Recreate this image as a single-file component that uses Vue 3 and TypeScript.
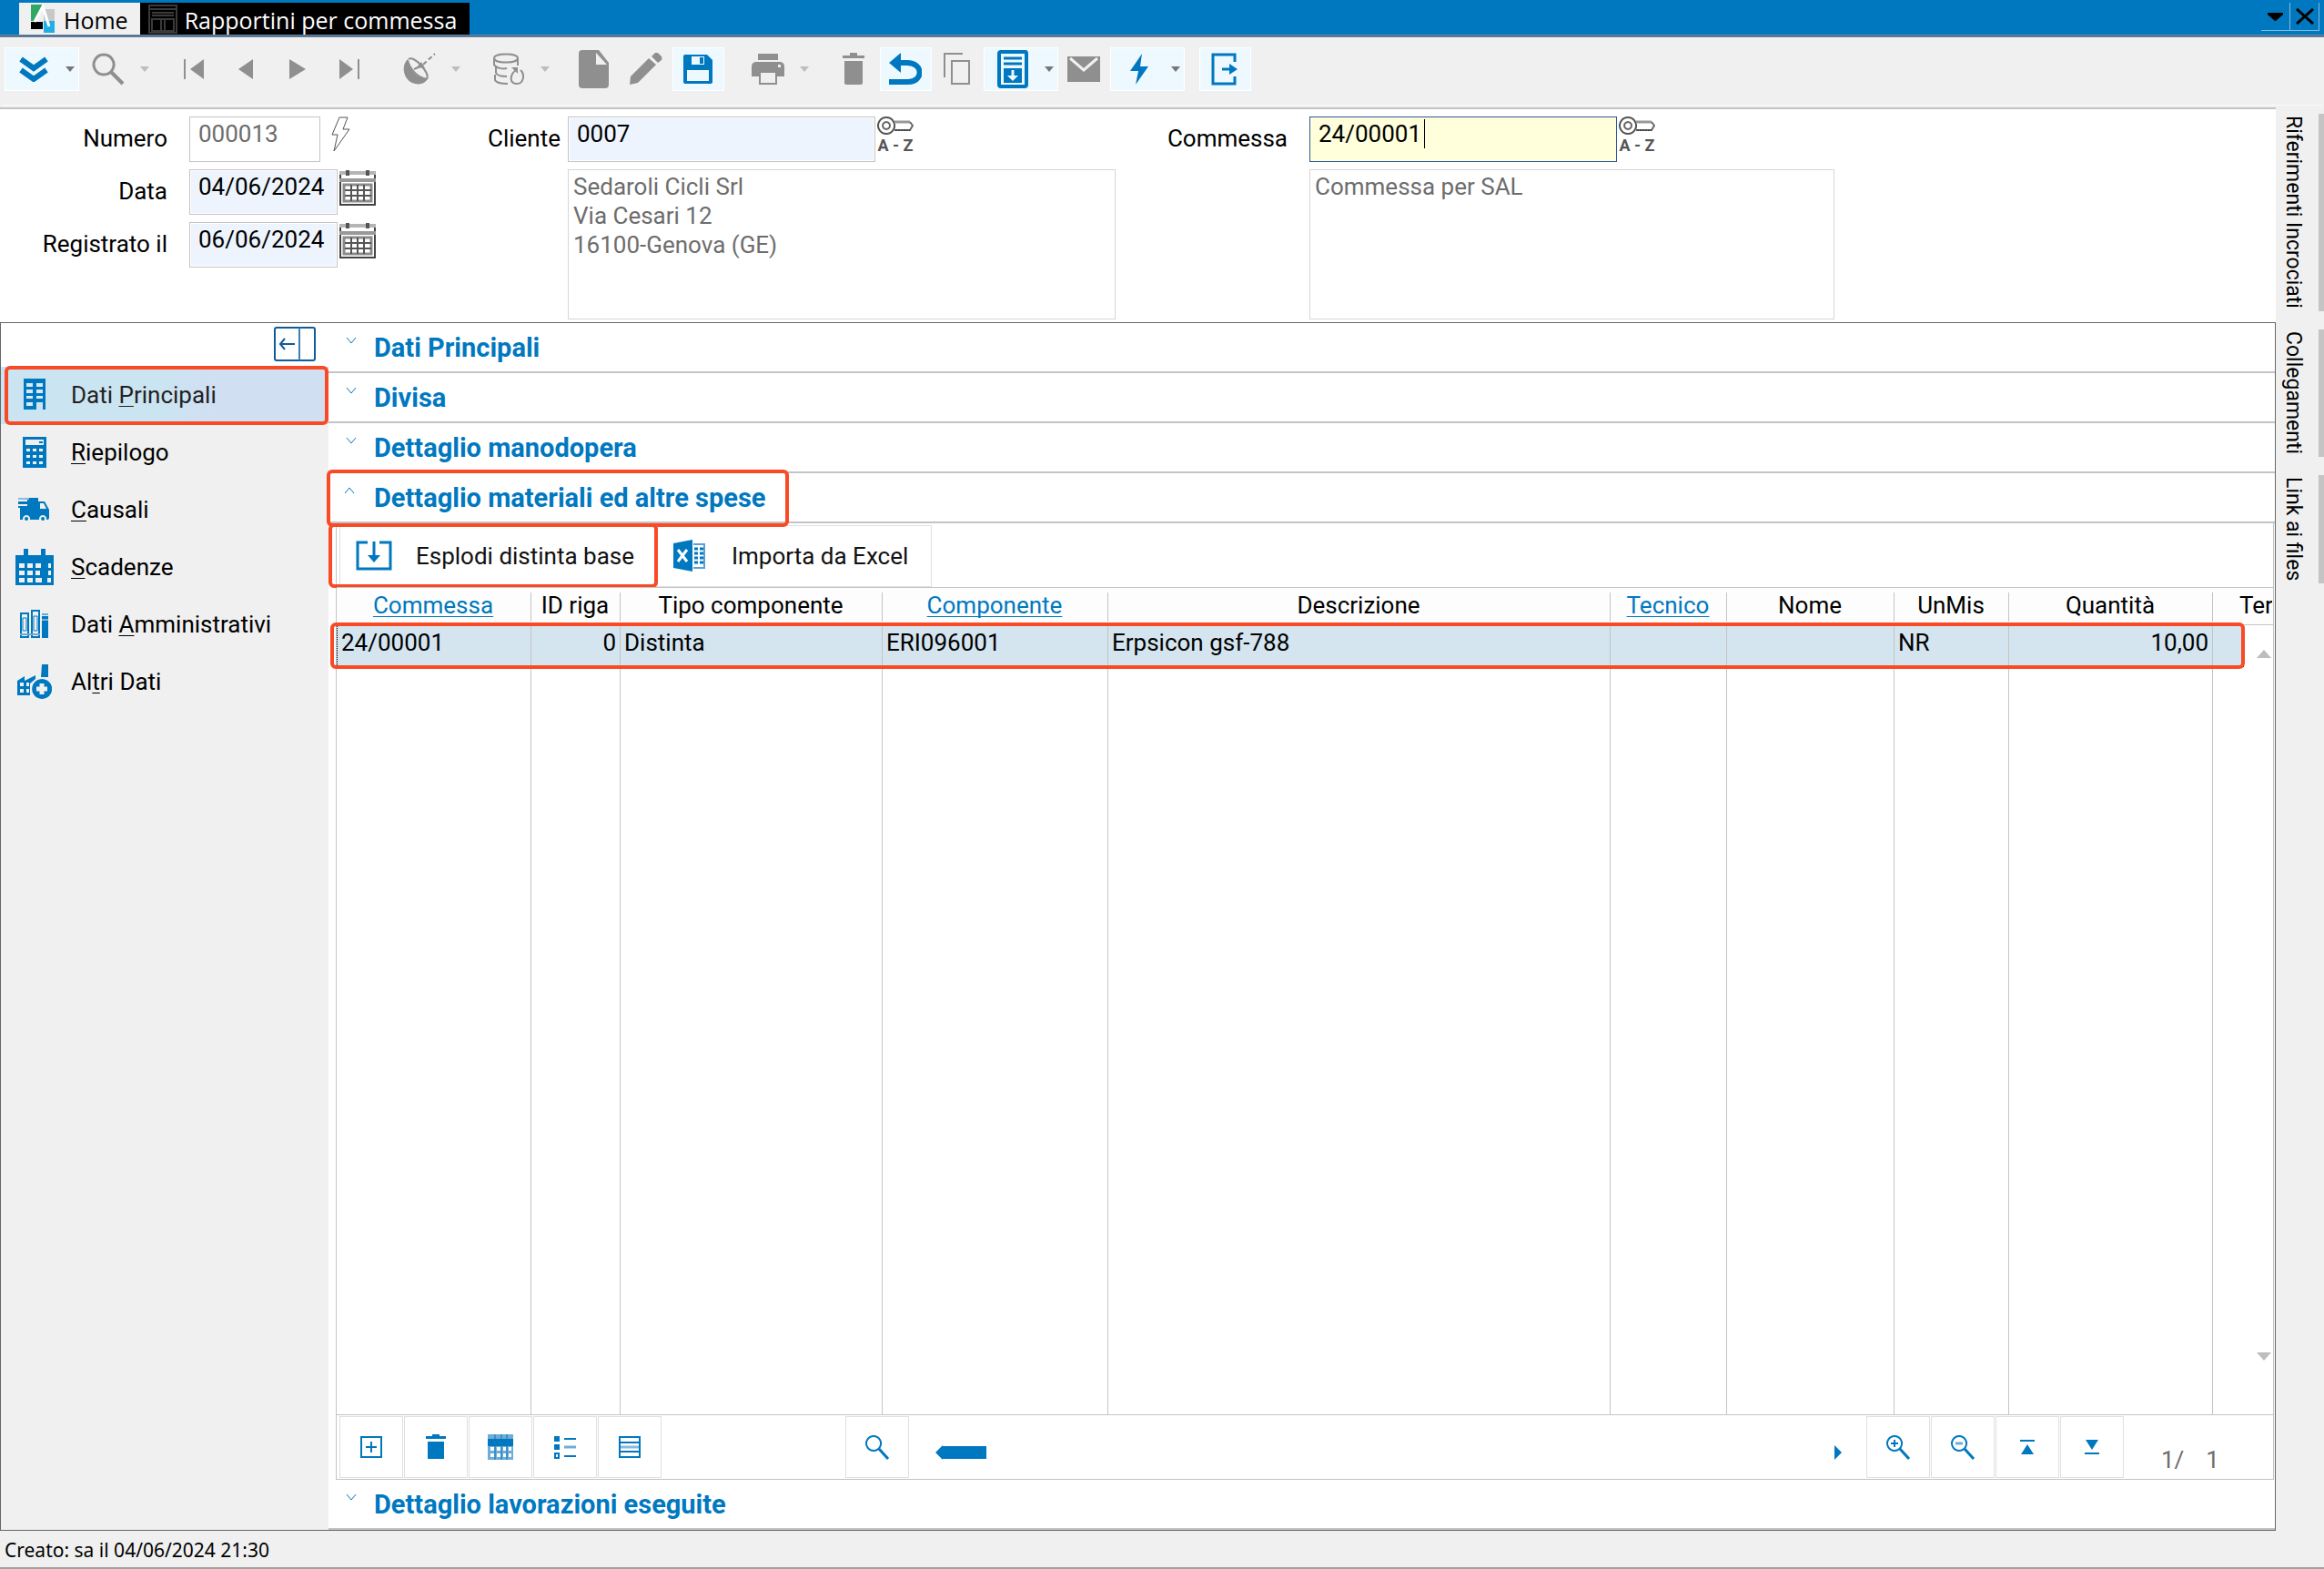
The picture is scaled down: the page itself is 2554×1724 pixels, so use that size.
<script setup lang="ts">
import { h, ref } from 'vue'

interface Shape {
  d: string
  fill?: string
  stroke?: string
  w?: number
  dash?: string
}
interface Glyph {
  w: number
  h: number
  shapes: Shape[]
}

const C = 'currentColor'
const line = (d: string, w = 2, stroke = C, dash?: string): Shape => ({ d, stroke, w, dash })
const solid = (d: string, fill = C): Shape => ({ d, fill })

const glyphs: Record<string, Glyph> = {
  down2: { w: 32, h: 28, shapes: [line('M2 3L16 13L30 3', 6), line('M2 15L16 25L30 15', 6)] },
  search: { w: 36, h: 36, shapes: [line('M13 2a11 11 0 1 0 .1 0z', 3), line('M21 21L34 34', 4)] },
  first: { w: 24, h: 24, shapes: [line('M2 1V23', 2), solid('M23 1V23L8 12z')] },
  prev: { w: 18, h: 24, shapes: [solid('M17 1V23L1 12z')] },
  next: { w: 20, h: 24, shapes: [solid('M1 1V23L19 12z')] },
  last: { w: 24, h: 24, shapes: [line('M22 1V23', 2), solid('M1 1V23L16 12z')] },
  dish: {
    w: 36, h: 36,
    shapes: [
      solid('M5 7C-3 15 1 29 10 33C17 36 25 34 27 28C17 29 7 21 5 7z'),
      line('M6 7C9 5 15 8 20 14C26 21 28 26 26 29', 2),
      line('M5 8C7 17 15 27 26 29', 2),
      line('M12 18L19 15', 2),
      line('M22 13L35 1', 2, C, '5 3'),
      solid('M15 16L20 10L24 17z'),
    ],
  },
  database: {
    w: 36, h: 36,
    shapes: [
      line('M2 6C2 0 28 0 28 6C28 12 2 12 2 6z', 2),
      line('M2 6V13C4 17 12 18 16 17M28 6V14', 2),
      line('M4 15V22C5 25 10 26 16 26M3 24V30C5 34 12 34 17 34', 2),
      line('M26 19C20 23 18 33 26 34C35 35 36 23 31 19', 2),
      solid('M21 16H28V23z'),
    ],
  },
  file: { w: 34, h: 42, shapes: [solid('M4 0H22L33 14V38Q33 42 29 42H4Q0 42 0 38V4Q0 0 4 0z'), solid('M19 3V16H31z', '#f0f0f0')] },
  pencil: { w: 36, h: 36, shapes: [solid('M0 35L1 26L21 6L29 13L9 33z'), solid('M24 4L28 0Q30 -1 32 1L35 4Q36 6 35 8L31 11z')] },
  save: {
    w: 32, h: 32,
    shapes: [
      solid('M2 0H26L32 6V30Q32 32 30 32H2Q0 32 0 30V2Q0 0 2 0z'),
      solid('M9 2H23V11H9z', '#eef9ff'), solid('M18 3H22V10H18z'),
      solid('M4 17H28V29H4z', '#eef9ff'),
    ],
  },
  print: {
    w: 36, h: 36,
    shapes: [
      solid('M7 1H29V8H7z'), solid('M4 10H32Q36 11 36 15V26H28V20H8V26H0V15Q0 11 4 10z'),
      line('M9 21H27V34H9z', 2), solid('M29 13H32V16H29z', '#f0f0f0'),
    ],
  },
  trash: { w: 24, h: 36, shapes: [solid('M0 3H8V0H16V3H24V6H0z'), solid('M2 9H22V33Q22 35 20 35H4Q2 35 2 33z')] },
  undo: { w: 36, h: 36, shapes: [line('M8 11H20C38 11 38 32 21 32H0', 6), solid('M0 11L13 0V22z')] },
  copy: { w: 30, h: 36, shapes: [line('M1 27V1H21', 2), line('M9 9H28V34H9z', 2)] },
  archive: {
    w: 34, h: 42,
    shapes: [
      line('M3 2H31Q32 2 32 4V38Q32 40 30 40H4Q2 40 2 38V4Q2 2 4 2z', 4),
      line('M7 9H27M7 15H27', 3), solid('M7 20H27V36H7z'),
      line('M17 22V30', 3, '#eef9ff'), solid('M11 28H23L17 34z', '#eef9ff'),
    ],
  },
  mail: { w: 36, h: 30, shapes: [solid('M0 1H36V29H0z'), line('M3 3L18 16L33 3', 3, '#f0f0f0')] },
  bolt: { w: 20, h: 34, shapes: [solid('M13 0L0 19H9L6 34L20 14H11z')] },
  exit: { w: 30, h: 36, shapes: [line('M26 10V2H2V34H26V26', 3), line('M12 18H24', 3), solid('M20 12L29 18L20 24z')] },
  calendar: {
    w: 40, h: 40,
    shapes: [
      line('M1 4V39H39V4', 2, '#444'), line('M0 4H40', 4, '#b5b5b5'), line('M0 12H40', 4, '#999'),
      line('M9 1V7M31 1V7', 4, '#555'), line('M5 17H35V35H5z', 3, '#8b8b8b'),
      line('M6 23H35M6 29H35M13 17V35M20 17V35M27 17V35', 2, '#555'),
    ],
  },
  boltOutline: { w: 22, h: 40, shapes: [line('M9 1H18L13 14H20L3 38L7 20H1z', 1, '#555')] },
  key: {
    w: 40, h: 22,
    shapes: [line('M10 1a9 9 0 1 0 .1 0z', 2, '#555'), line('M10 6a4 4 0 1 0 .1 0z', 2, '#666'), line('M19 6H36', 3, '#999'), line('M36 6L39 10L36 15H19', 2, '#666'), line('M20 15H36', 2, '#444', '2 1')],
  },
  collapse: {
    w: 46, h: 38,
    shapes: [line('M3 1H43Q45 1 45 3V35Q45 37 43 37H3Q1 37 1 35V3Q1 1 3 1z', 2, '#0f5c99'), line('M28 1V37', 2, '#3f80b4'), line('M7 19H23M12 13L7 19L12 25', 2, '#0f5c99')],
  },
  building: {
    w: 24, h: 36,
    shapes: [solid('M0 0H24V34H21V26H14V34H0z'), solid('M3 5H10V9H3zM14 5H21V9H14zM3 12H10V16H3zM14 12H21V16H14zM3 19H10V22H3zM14 19H21V22H14zM3 26H10V30H3z', '#d8e8f4')],
  },
  calculator: {
    w: 26, h: 34,
    shapes: [solid('M0 0H26V34H0z'), solid('M3 3H23V9H3z', '#f0f0f0'), solid('M18 5H22V7H18z'), solid('M4 13H8V16H4zM11 13H15V16H11zM18 13H22V16H18zM4 20H8V23H4zM11 20H15V23H11zM18 20H22V23H18zM4 27H8V30H4zM11 27H15V30H11zM18 27H22V30H18z', '#f0f0f0')],
  },
  truck: {
    w: 36, h: 30,
    shapes: [
      solid('M10 2H22V26H2V13H0V11H10V9H0V6H10z'), solid('M22 6H29L34 15V24Q34 26 32 26H22z'),
      solid('M24 8H28L31 14H24z', '#f0f0f0'), line('M0 3H12', 2, '#8bbbdc'),
      solid('M9 21a4 4 0 1 0 .1 0zM27 21a4 4 0 1 0 .1 0z', '#f0f0f0'), solid('M9 23a2 2 0 1 0 .1 0zM27 23a2 2 0 1 0 .1 0z'),
    ],
  },
  schedule: {
    w: 42, h: 42,
    shapes: [
      solid('M0 8H9V1H14V8H28V1H33V8H42V41H0z'),
      solid('M4 17H10V22H4zM13 17H19V22H13zM22 17H28V22H22zM36 17H39V22H36zM4 25H10V30H4zM13 25H19V30H13zM22 25H27V30H22zM36 25H39V30H36zM4 33H10V38H4zM13 33H19V38H13zM22 33H29V38H22zM35 33H39V38H35z', '#f0f0f0'),
    ],
  },
  books: {
    w: 34, h: 34,
    shapes: [line('M2 5H10V31H2z', 2), line('M14 2H22V31H14z', 2), line('M4 10H8V24H4zM16 8H20V24H16z', 1), solid('M25 8H32V32H25z'), line('M25 6H32M1 28H23', 2, '#6baad6'), line('M25 12H32', 1, '#f0f0f0')],
  },
  factory: {
    w: 38, h: 38,
    shapes: [
      solid('M0 18L8 13V18L20 12V16L14 21V34H0z'), solid('M3 20H7V24H3zM10 20H13V24H10zM3 27H7V31H3zM10 27H13V31H10z', '#f0f0f0'),
      solid('M27 0H34V14H26z'), solid('M27.1 16a11 11 0 1 0 .1 0z'), line('M27 21V33M21 27H33', 5, '#f0f0f0'),
    ],
  },
  explode: { w: 40, h: 34, shapes: [line('M13 2H2V31H38V2H26', 3), line('M20 1V20', 3), solid('M13 16H27L20 24z')] },
  excel: {
    w: 36, h: 36,
    shapes: [
      solid('M0 4L21 0V35L0 31z'), line('M5 11L15 24M15 11L5 24', 3, '#fff'),
      line('M22 5H34V31H22', 2, '#5aa2d3'), line('M23 10H27M29 10H33M23 15H27M29 15H33M23 20H27M29 20H33M23 25H27M29 25H33', 3),
    ],
  },
  add: { w: 24, h: 24, shapes: [line('M1 1H23V23H1z', 2), line('M12 6V18M6 12H18', 2)] },
  remove: { w: 22, h: 28, shapes: [solid('M0 2H7V0H15V2H22V5H0zM2 8H20V27H2z')] },
  gridView: { w: 28, h: 28, shapes: [solid('M0 0H28V28H0z', '#6fadd8'), solid('M0 5H28V13H0z'), solid('M3 14H7V18H3zM10 14H14V18H10zM17 14H20V18H17zM23 14H26V18H23zM3 21H7V25H3zM10 21H14V25H10zM17 21H20V25H17zM23 21H26V25H23z', '#fff'), line('M8 0V28M15 0V28M21 0V28', 1)] },
  listView: { w: 26, h: 28, shapes: [solid('M1 2H7V8H1zM1 11H7V17H1z'), line('M2 21H6V26H2z', 2), line('M12 5H25M12 24H25', 2), line('M12 14H25', 3, '#6fadd8')] },
  tableView: { w: 26, h: 26, shapes: [line('M2 2H24V24H2zM2 8H24M2 18H24', 2), line('M3 13H23', 3, '#8bbbdc')] },
  find: { w: 28, h: 28, shapes: [line('M10 2a8 8 0 1 0 .1 0z', 2), line('M16 16L26 27', 3)] },
  zoomIn: { w: 28, h: 28, shapes: [line('M10 2a8 8 0 1 0 .1 0z', 2), line('M16 16L26 27', 3), line('M10 6V14M6 10H14', 2)] },
  zoomOut: { w: 28, h: 28, shapes: [line('M10 2a8 8 0 1 0 .1 0z', 2), line('M16 16L26 27', 3), line('M6 10H14', 3, '#6fadd8')] },
  top: { w: 16, h: 16, shapes: [line('M0 1H16', 2), solid('M8 5L15 16H1z')] },
  bottom: { w: 16, h: 16, shapes: [line('M0 15H16', 2), solid('M8 11L15 0H1z')] },
  thumb: { w: 56, h: 16, shapes: [solid('M0 8L8 0V16zM8 1H56V15H8z')] },
  scrollRight: { w: 8, h: 16, shapes: [solid('M0 0L8 8L0 16z')] },
  scrollUp: { w: 16, h: 9, shapes: [solid('M0 9L8 0L16 9z')] },
  scrollDown: { w: 16, h: 9, shapes: [solid('M0 0L8 9L16 0z')] },
  caretDown: { w: 10, h: 6, shapes: [solid('M0 0H10L5 6z')] },
  menuDown: { w: 17, h: 9, shapes: [solid('M0 0H17V2L9 9H8L0 2z', '#000')] },
  close: { w: 20, h: 18, shapes: [line('M1 1L19 17M19 1L1 17', 3, '#000')] },
  chevDown: { w: 12, h: 8, shapes: [line('M1 1L6 7L11 1', 1)] },
  chevUp: { w: 12, h: 8, shapes: [line('M1 7L6 1L11 7', 1)] },
  logo: {
    w: 26, h: 32,
    shapes: [solid('M0 0H13L4 18H0z', '#2fa866'), solid('M14 5H26V18H14z', '#c8c8c8'), solid('M0 19H13V27H0z', '#000'), solid('M14 18H26V31H14z', '#21aee6'), line('M4 19L13 2L20 24', 3, '#fff')],
  },
  windowIcon: {
    w: 32, h: 32,
    shapes: [line('M1 1H31V31H1zM1 5H31M4 9H28M4 12H28M4 16H28V29H4zM14 16V29M18 16V29', 2, '#3a3a3a')],
  },
}

function Icon(props: { name: string }) {
  const g = glyphs[props.name]
  return h(
    'svg',
    { class: 'icon', width: g.w, height: g.h, viewBox: `0 0 ${g.w} ${g.h}`, 'aria-hidden': 'true' },
    g.shapes.map((s) =>
      h('path', { d: s.d, fill: s.fill ?? 'none', stroke: s.stroke, 'stroke-width': s.w, 'stroke-dasharray': s.dash }),
    ),
  )
}
Icon.props = ['name']

interface Tool {
  icon: string
  label: string
  drop?: boolean
  on?: boolean
}
const toolGroups: Tool[][] = [
  [{ icon: 'down2', label: 'Espandi', drop: true, on: true }, { icon: 'search', label: 'Cerca', drop: true }],
  [
    { icon: 'first', label: 'Primo' }, { icon: 'prev', label: 'Precedente' },
    { icon: 'next', label: 'Successivo' }, { icon: 'last', label: 'Ultimo' },
  ],
  [{ icon: 'dish', label: 'Radar', drop: true }],
  [{ icon: 'database', label: 'Archivi', drop: true }],
  [{ icon: 'file', label: 'Nuovo' }, { icon: 'pencil', label: 'Modifica' }, { icon: 'save', label: 'Salva', on: true }],
  [{ icon: 'print', label: 'Stampa', drop: true }],
  [
    { icon: 'trash', label: 'Elimina' }, { icon: 'undo', label: 'Annulla', on: true }, { icon: 'copy', label: 'Copia' },
    { icon: 'archive', label: 'Archivia', drop: true, on: true }, { icon: 'mail', label: 'Posta' },
    { icon: 'bolt', label: 'Azioni', drop: true, on: true },
  ],
  [{ icon: 'exit', label: 'Esci', on: true }],
]

const menu = [
  { icon: 'building', pre: 'Dati ', key: 'P', post: 'rincipali', active: true },
  { icon: 'calculator', pre: '', key: 'R', post: 'iepilogo' },
  { icon: 'truck', pre: '', key: 'C', post: 'ausali' },
  { icon: 'schedule', pre: '', key: 'S', post: 'cadenze' },
  { icon: 'books', pre: 'Dati ', key: 'A', post: 'mministrativi' },
  { icon: 'factory', pre: 'Al', key: 't', post: 'ri Dati' },
]

const sections = ['Dati Principali', 'Divisa', 'Dettaglio manodopera']

const columns = [
  { title: 'Commessa', cls: 'c-com', link: true },
  { title: 'ID riga', cls: 'c-id' },
  { title: 'Tipo componente', cls: 'c-tipo' },
  { title: 'Componente', cls: 'c-comp', link: true },
  { title: 'Descrizione', cls: 'c-desc' },
  { title: 'Tecnico', cls: 'c-tec', link: true },
  { title: 'Nome', cls: 'c-nome' },
  { title: 'UnMis', cls: 'c-um' },
  { title: 'Quantità', cls: 'c-qta' },
]
const row = [
  { v: '24/00001' }, { v: '0', num: true }, { v: 'Distinta' }, { v: 'ERI096001' }, { v: 'Erpsicon gsf-788' },
  { v: '' }, { v: '' }, { v: 'NR' }, { v: '10,00', num: true }, { v: '' },
]

const gridTools = [
  { icon: 'add', label: 'Aggiungi riga' }, { icon: 'remove', label: 'Elimina riga' }, { icon: 'gridView', label: 'Griglia' },
  { icon: 'listView', label: 'Elenco' }, { icon: 'tableView', label: 'Tabella' },
]
const pageTools = [
  { icon: 'zoomIn', label: 'Ingrandisci' }, { icon: 'zoomOut', label: 'Riduci' },
  { icon: 'top', label: 'Inizio' }, { icon: 'bottom', label: 'Fine' },
]
const sideTabs = ['Riferimenti Incrociati', 'Collegamenti', 'Link ai files']

const numero = ref('000013')
const data = ref('04/06/2024')
const registrato = ref('06/06/2024')
const cliente = ref('0007')
const commessa = ref('24/00001')
const clienteInfo = ref('Sedaroli Cicli Srl\nVia Cesari 12\n16100-Genova (GE)')
const commessaInfo = ref('Commessa per SAL')
</script>

<template>
  <div class="app">
    <header class="titlebar">
      <nav class="tabs">
        <a href="#home" class="tab home"><Icon name="logo" />Home</a>
        <a href="#rapportini" class="tab current"><Icon name="windowIcon" />Rapportini per commessa</a>
      </nav>
      <div class="window-tools">
        <button type="button" aria-label="Elenco finestre"><Icon name="menuDown" /></button>
        <button type="button" aria-label="Chiudi"><Icon name="close" /></button>
      </div>
    </header>

    <div class="toolbar">
      <div v-for="(group, i) in toolGroups" :key="i" class="tool-group">
        <button
          v-for="t in group" :key="t.icon" type="button" class="tool"
          :class="{ on: t.on, drop: t.drop }" :aria-label="t.label"
        >
          <span class="tool-icon"><Icon :name="t.icon" /></span>
          <span v-if="t.drop" class="tool-caret"><Icon name="caretDown" /></span>
        </button>
      </div>
    </div>

    <div class="body">
      <main class="content">
        <form class="form" @submit.prevent>
          <div class="group g1">
            <label for="numero">Numero</label>
            <div class="field">
              <input id="numero" v-model="numero" class="w-num dim" />
              <button type="button" class="aux bolt" aria-label="Numerazione"><Icon name="boltOutline" /></button>
            </div>
            <label for="data">Data</label>
            <div class="field">
              <input id="data" v-model="data" class="w-date" />
              <button type="button" class="aux" aria-label="Calendario data"><Icon name="calendar" /></button>
            </div>
            <label for="registrato">Registrato il</label>
            <div class="field">
              <input id="registrato" v-model="registrato" class="w-date" />
              <button type="button" class="aux" aria-label="Calendario registrazione"><Icon name="calendar" /></button>
            </div>
          </div>
          <div class="group g2">
            <label for="cliente">Cliente</label>
            <div class="field">
              <input id="cliente" v-model="cliente" class="w-code" />
              <button type="button" class="aux" aria-label="Cerca cliente"><Icon name="key" /><b>A - Z</b></button>
            </div>
            <textarea v-model="clienteInfo" class="info" aria-label="Dati cliente" readonly></textarea>
          </div>
          <div class="group g3">
            <label for="commessa">Commessa</label>
            <div class="field">
              <input id="commessa" v-model="commessa" class="w-code active" />
              <i class="text-caret"></i>
              <button type="button" class="aux" aria-label="Cerca commessa"><Icon name="key" /><b>A - Z</b></button>
            </div>
            <textarea v-model="commessaInfo" class="info" aria-label="Dati commessa" readonly></textarea>
          </div>
        </form>

        <div class="panel">
          <aside class="sidebar">
            <div class="side-head">
              <button type="button" class="plain" aria-label="Riduci menu"><Icon name="collapse" /></button>
            </div>
            <a v-for="m in menu" :key="m.icon" href="#" class="side-item" :class="{ active: m.active, marked: m.active }">
              <span class="side-icon"><Icon :name="m.icon" /></span>
              <span>{{ m.pre }}<u>{{ m.key }}</u>{{ m.post }}</span>
            </a>
          </aside>

          <section class="detail">
            <button v-for="s in sections" :key="s" type="button" class="section">
              <Icon name="chevDown" /><span>{{ s }}</span>
            </button>
            <button type="button" class="section open">
              <Icon name="chevUp" /><span class="marked">Dettaglio materiali ed altre spese</span>
            </button>

            <div class="grid-box">
              <div class="actions">
                <button type="button" class="action marked"><Icon name="explode" />Esplodi distinta base</button>
                <button type="button" class="action excel"><Icon name="excel" />Importa da Excel</button>
              </div>
              <div class="table-wrap marked">
                <table>
                  <colgroup>
                    <col v-for="c in columns" :key="c.cls" :class="c.cls" />
                    <col class="c-ter" />
                    <col class="c-scroll" />
                  </colgroup>
                  <thead>
                    <tr>
                      <th v-for="c in columns" :key="c.title">
                        <a v-if="c.link" href="#">{{ c.title }}</a>
                        <template v-else>{{ c.title }}</template>
                      </th>
                      <th class="cut"><span>Ter</span></th>
                      <th class="cut"></th>
                    </tr>
                  </thead>
                  <tbody>
                    <tr class="selected">
                      <td v-for="(c, i) in row" :key="i" :class="{ num: c.num }">{{ c.v }}</td>
                      <td class="scroll up"><button type="button" class="plain" aria-label="Scorri su"><Icon name="scrollUp" /></button></td>
                    </tr>
                    <tr class="filler">
                      <td v-for="(c, i) in row" :key="i"></td>
                      <td class="scroll down"><button type="button" class="plain" aria-label="Scorri giù"><Icon name="scrollDown" /></button></td>
                    </tr>
                  </tbody>
                </table>
              </div>
              <div class="grid-foot">
                <button v-for="t in gridTools" :key="t.icon" type="button" class="sq" :aria-label="t.label"><Icon :name="t.icon" /></button>
                <button type="button" class="sq find" aria-label="Trova"><Icon name="find" /></button>
                <div class="hscroll">
                  <button type="button" class="plain" aria-label="Scorri a sinistra"><Icon name="thumb" /></button>
                  <button type="button" class="plain" aria-label="Scorri a destra"><Icon name="scrollRight" /></button>
                </div>
                <button v-for="t in pageTools" :key="t.icon" type="button" class="sq" :aria-label="t.label"><Icon :name="t.icon" /></button>
                <div class="pages"><span>1/</span><span>1</span></div>
              </div>
            </div>

            <button type="button" class="section"><Icon name="chevDown" /><span>Dettaglio lavorazioni eseguite</span></button>
          </section>
        </div>
      </main>

      <aside class="rail">
        <button v-for="t in sideTabs" :key="t" type="button" class="rail-tab">{{ t }}</button>
      </aside>
    </div>

    <footer class="status">Creato: sa il 04/06/2024 21:30</footer>
  </div>
</template>

<style>
body {
  margin: 0;
  background: #f0f0f0;
}
</style>

<style scoped>
*,
*::after {
  box-sizing: border-box;
}
.app {
  display: flex;
  flex-direction: column;
  height: 100vh;
  min-height: 1000px;
  background: #f0f0f0;
  color: #000;
  font: 26px/32px Roboto, sans-serif;
}
button {
  padding: 0;
  border: 0;
  background: none;
  color: inherit;
  font: inherit;
}
a {
  color: inherit;
  text-decoration: none;
}
.icon {
  display: block;
  flex: none;
}
.plain {
  display: block;
}
.marked {
  position: relative;
}
.marked::after {
  content: '';
  position: absolute;
  inset: 0;
  border: 4px solid #f94a25;
  border-radius: 6px;
  pointer-events: none;
}

/* title bar */
.titlebar {
  display: flex;
  justify-content: space-between;
  flex: none;
  height: 41px;
  padding: 3px 5px 0 21px;
  background: #0078c0;
  border-bottom: 3px double #8d8088;
  font: 25px/32px "Open Sans", sans-serif;
}
.tabs {
  display: flex;
}
.tab {
  display: flex;
  align-items: center;
  height: 35px;
  padding-top: 2px;
}
.tab .icon {
  margin-top: -2px;
}
.home {
  gap: 10px;
  padding-right: 13px;
  padding-left: 13px;
  background: #f0f0f0;
}
.current {
  gap: 8px;
  padding-right: 14px;
  padding-left: 9px;
  background: #000;
  color: #fff;
}
.window-tools {
  display: flex;
  height: 31px;
  border-bottom: 1px solid #7fb9dd;
}
.window-tools button {
  display: flex;
  align-items: center;
  justify-content: center;
  width: 32px;
  border-right: 1px solid #7fb9dd;
}

/* toolbar */
.toolbar {
  display: flex;
  flex: none;
  gap: 16px;
  height: 75px;
  margin: 0 2px 2px;
  padding: 11px 3px 0;
  border-bottom: 1px solid #fafafa;
}
.tool-group {
  display: flex;
}
.tool {
  display: flex;
  align-items: center;
  width: 57px;
  height: 48px;
  padding-right: 2px;
  border: 1px solid transparent;
  color: #8f8f8f;
}
.tool.drop {
  width: 82px;
  padding-right: 0;
}
.tool.on {
  border-color: #fff;
  background: #eef9ff;
  color: #0078c0;
}
.tool-icon {
  display: flex;
  flex: 1;
  justify-content: center;
}
.tool-caret {
  display: flex;
  justify-content: center;
  width: 18px;
  color: #bdbdbd;
}
.on .tool-caret {
  color: #777;
}

/* body */
.body {
  display: flex;
  flex: 1;
  min-height: 0;
}
.content {
  display: flex;
  flex: 1;
  flex-direction: column;
  min-width: 0;
  border-top: 2px solid #c4c4c4;
  background: #fff;
}
.form {
  display: flex;
  flex: none;
  height: 234px;
  padding-top: 8px;
}
.group {
  display: grid;
  align-content: start;
  row-gap: 8px;
}
.g1 {
  grid-template-columns: 184px auto;
  column-gap: 24px;
  width: 440px;
}
.g2 {
  grid-template-columns: 176px 602px;
  column-gap: 8px;
}
.g3 {
  grid-template-columns: 189px 577px;
  column-gap: 24px;
}
label {
  line-height: 48px;
  text-align: right;
}
.field {
  position: relative;
  display: flex;
  gap: 2px;
}
input {
  height: 50px;
  padding: 0 8px 12px 9px;
  border: 1px solid #c4c4c4;
  border-radius: 0;
  background: #edf4fd;
  box-shadow: inset 0 0 0 1px #fff;
  color: #000;
  font: inherit;
  outline: 0;
}
input.dim {
  background: #fff;
  color: #6d6d6d;
}
input.active {
  border-color: #2b579a;
  background: #ffffdc;
  box-shadow: none;
}
.w-num {
  width: 144px;
}
.w-date {
  width: 163px;
}
.w-code {
  width: 338px;
}
.text-caret {
  position: absolute;
  top: 3px;
  left: 126px;
  width: 1px;
  height: 32px;
  background: #000;
}
.aux {
  height: 40px;
}
.aux.bolt {
  margin-left: 10px;
}
.aux b {
  display: block;
  color: #555;
  font: 700 18px/20px Roboto, sans-serif;
}
.info {
  grid-column: 2;
  height: 165px;
  margin: 0;
  padding: 2px 5px;
  border: 1px solid #d6d6d6;
  border-radius: 0;
  background: #fff;
  color: #6d6d6d;
  font: inherit;
  outline: 0;
  resize: none;
}

/* panel */
.panel {
  display: flex;
  flex: 1;
  min-height: 0;
  border: 1px solid #666;
}
.sidebar {
  flex: none;
  width: 360px;
  background: #f0f0f0;
}
.side-head {
  display: flex;
  justify-content: flex-end;
  height: 48px;
  padding: 4px 14px 0 0;
  background: #fff;
}
.side-head button {
  height: 38px;
}
.side-item {
  display: flex;
  align-items: center;
  height: 63px;
  padding-bottom: 2px;
}
.side-item u,
th a {
  text-decoration: underline 1px;
  text-decoration-skip-ink: none;
  text-underline-offset: 3px;
}
.side-item.active {
  background: linear-gradient(90deg, #cbe4f1 50%, #d1dff3 65%);
  color: #222;
}
.side-item.marked::after {
  inset: -1px 0 -1px 4px;
}
.side-icon {
  display: flex;
  justify-content: center;
  width: 74px;
  margin-right: 3px;
  color: #0078c0;
}
.detail {
  display: flex;
  flex: 1;
  flex-direction: column;
  min-width: 0;
  background: #fff;
}
.section {
  display: flex;
  flex: none;
  align-items: center;
  height: 55px;
  padding-left: 19px;
  border-bottom: 2px solid #c4c4c4;
  color: #0078c0;
  font-size: 29px;
  font-weight: 700;
  text-align: left;
}
.section .icon {
  margin: 0 19px 16px 0;
}
.section.open {
  padding-left: 17px;
}
.section.open .icon {
  margin-right: 21px;
}
.section .marked::after {
  inset: -15px -26px -16px -52px;
}
.grid-box {
  display: flex;
  flex: 1;
  flex-direction: column;
  min-height: 0;
  margin: 0 1px 0 8px;
  border: 1px solid #c4c4c4;
  border-top: 0;
}
.actions {
  display: flex;
  flex: none;
  height: 70px;
  padding: 2px 0 0 3px;
}
.action {
  display: flex;
  align-items: center;
  gap: 26px;
  width: 349px;
  padding-left: 17px;
  border: 1px solid #e0e0e0;
  color: #111;
}
.action .icon {
  color: #0078c0;
}
.action.marked::after {
  inset: -3px -2px -2px -13px;
}
.action.excel {
  gap: 28px;
  width: 302px;
}
.table-wrap {
  flex: 1;
  min-height: 0;
}
.table-wrap.marked::after {
  inset: 39px 31px auto -7px;
  height: 51px;
}
table {
  width: 100%;
  height: 100%;
  border-spacing: 0;
  table-layout: fixed;
  border-top: 1px solid #c4c4c4;
}
.c-com { width: 214px; }
.c-id { width: 98px; }
.c-tipo { width: 288px; }
.c-comp { width: 248px; }
.c-tec { width: 128px; }
.c-nome { width: 184px; }
.c-um { width: 126px; }
.c-qta { width: 224px; }
.c-ter { width: 34px; }
.c-scroll { width: 32px; }
thead tr {
  background: #fdfdfd;
}
th {
  height: 41px;
  padding: 0 2px 3px 0;
  border-bottom: 1px solid #c4c4c4;
  background: linear-gradient(#c4c4c4, #c4c4c4) right 0 top 5px / 1px 32px no-repeat;
  font-weight: 400;
  line-height: 32px;
}
th a {
  color: #0078c0;
}
th.cut {
  background: none;
}
th.cut span {
  display: block;
  overflow: hidden;
  width: 36px;
  margin-left: 29px;
  text-align: left;
}
td {
  padding: 0 4px;
  border-right: 1px solid #c4c4c4;
}
td:nth-last-child(-n + 2) {
  border-right: 0;
}
.selected td {
  height: 46px;
  padding-bottom: 9px;
  background: #d4e5f0;
}
.selected td:first-child {
  border-left: 1px dotted #000;
}
.selected td:nth-last-child(2) {
  border-right: 1px dotted #000;
}
.selected td.scroll {
  padding: 0 0 0 14px;
  background: none;
}
.num {
  text-align: right;
}
td.scroll {
  padding: 0 0 0 14px;
  color: #bdbdbd;
}
.filler td.scroll {
  padding-bottom: 59px;
  vertical-align: bottom;
}
.selected td.scroll.up {
  padding-top: 16px;
}
.grid-foot {
  display: flex;
  flex: none;
  gap: 1px;
  height: 71px;
  padding: 1px 0 1px 3px;
  border-top: 1px solid #c4c4c4;
  color: #0078c0;
}
.sq {
  display: flex;
  flex: none;
  align-items: center;
  justify-content: center;
  width: 70px;
  height: 68px;
  border: 1px solid #e0e0e0;
}
.find {
  margin-left: 201px;
}
.hscroll {
  display: flex;
  flex: 1;
  align-items: center;
  justify-content: space-between;
  padding: 12px 26px 0 28px;
}
.pages {
  display: flex;
  gap: 24px;
  width: 163px;
  padding: 32px 0 0 40px;
  color: #6d6d6d;
}

/* right rail */
.rail {
  display: flex;
  flex: none;
  flex-direction: column;
  gap: 20px;
  width: 53px;
  padding-top: 7px;
}
.rail-tab {
  padding: 2px 10px 3px 0;
  border-right: 6px solid #c4c4c4;
  font-size: 23px;
  writing-mode: vertical-rl;
}

.status {
  flex: none;
  height: 42px;
  padding-left: 5px;
  border-bottom: 2px solid #a0a0a0;
  font: 21px/42px "Noto Sans", sans-serif;
}
</style>
